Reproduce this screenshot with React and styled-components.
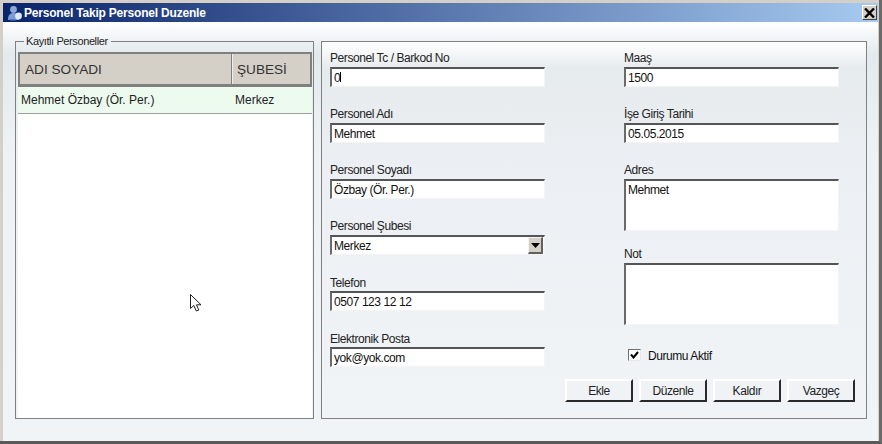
import React from "react";
import styled, { createGlobalStyle } from "styled-components";

const GlobalStyle = createGlobalStyle`
  html, body {
    margin: 0;
    padding: 0;
    background: #d4d0c8;
  }
  body {
    font-family: "Liberation Sans", Arial, sans-serif;
    font-size: 12px;
    letter-spacing: -0.43px;
    color: #111;
  }
`;

const Window = styled.div`
  position: relative;
  width: 882px;
  height: 444px;
  box-sizing: border-box;
  display: flex;
  flex-direction: column;
  padding: 3px 1px 0 3px;
  background: #d4d0c8;
  border-right: 3px solid #6a6a6a;
  border-bottom: 3px solid #5a5a5a;
`;

const TitleBar = styled.div`
  height: 19px;
  flex: none;
  display: flex;
  align-items: center;
  padding: 0 1px 0 3px;
  gap: 1px;
  background: linear-gradient(90deg, #0a246a 0%, #a6caf0 100%);
`;

const Title = styled.span`
  flex: 1;
  font-size: 12px;
  font-weight: bold;
  letter-spacing: -0.2px;
  color: #fff;
`;

const CloseButton = styled.button`
  width: 15px;
  height: 15px;
  padding: 0;
  display: flex;
  align-items: center;
  justify-content: center;
  background: #d4d0c8;
  border: 1px solid;
  border-color: #fff #404040 #404040 #fff;
`;

const Body = styled.div`
  flex: 1;
  display: flex;
  gap: 7px;
  padding: 19px 11px 22px 12px;
  background: linear-gradient(180deg, #fff 0, #e3e9ec 32px, #eef2f5 130px, #f0f4f7 100%);
`;

const Fieldset = styled.fieldset`
  width: 299px;
  box-sizing: border-box;
  flex: none;
  margin: -5px 0 0;
  padding: 5px 1px 0 2px;
  border: 1px solid #808080;
  min-width: 0;
`;

const Legend = styled.legend`
  margin-left: 6px;
  padding: 0 3px 0 2px;
  font-size: 11px;
  line-height: 11px;
  letter-spacing: -0.4px;
  color: #222;
`;

const List = styled.div`
  height: 100%;
  background: #fff;
`;

const ListHeader = styled.div`
  display: flex;
  height: 35px;
  box-sizing: border-box;
  background: #d4d0c8;
  border: 2px solid #808080;
  border-bottom-width: 3px;
`;

const HeaderCell = styled.div`
  width: ${(p) => p.$width}px;
  box-sizing: border-box;
  display: flex;
  align-items: center;
  padding-left: 5px;
  font-size: 13.6px;
  letter-spacing: 0;
  color: #333;
  ${(p) => p.$divided && "border-right: 1px solid #808080; box-shadow: 1px 0 0 #eee;"}
`;

const ListRow = styled.div`
  display: flex;
  align-items: center;
  height: 27px;
  box-sizing: border-box;
  background: #edfbee;
  border-bottom: 1px solid #a0a0a0;
  font-size: 12px;
  letter-spacing: 0;
  color: #222;
`;

const RowCell = styled.div`
  width: ${(p) => p.$width}px;
  padding-left: ${(p) => p.$pad}px;
  box-sizing: border-box;
`;

const FormPanel = styled.div`
  flex: 1;
  display: flex;
  box-sizing: border-box;
  position: relative;
  padding: 9px 0 0 8px;
  gap: 79px;
  border: 1px solid #808080;
  background: linear-gradient(180deg, #fff 0, #e6ebee 26px, #eceff3 130px, #f0f4f7 100%);
`;

const Column = styled.div`
  width: 215px;
  display: flex;
  flex-direction: column;
`;

const Field = styled.label`
  position: relative;
  display: flex;
  flex-direction: column;
  margin-bottom: ${(p) => p.$after ?? 20}px;
`;

const FieldLabel = styled.span`
  height: 16px;
  line-height: ${(p) => (p.$low ? 17 : 15)}px;
  color: #222;
`;

const sunken = `
  box-sizing: border-box;
  width: 215px;
  margin: 0;
  padding: 0 0 0 2px;
  background: #fff;
  border: 2px solid;
  border-color: #6a6a6a #f4f4f4 #f4f4f4 #6a6a6a;
  border-top-color: #555;
  border-right-width: 1px;
  border-bottom-width: 1px;
  font-family: "Liberation Sans", Arial, sans-serif;
  font-size: 12px;
  letter-spacing: -0.43px;
  color: #111;
  outline: none;
`;

const TextInput = styled.input`
  ${sunken}
  height: 20px;
`;

const Caret = styled.span`
  position: absolute;
  left: 10px;
  bottom: 5px;
  width: 1px;
  height: 10px;
  background: #000;
`;

const TextArea = styled.textarea`
  ${sunken}
  display: block;
  height: ${(p) => p.$height}px;
  resize: none;
  overflow: hidden;
  padding-top: 2px;
`;

const Select = styled.div`
  ${sunken}
  height: 20px;
  display: flex;
  align-items: center;
  justify-content: space-between;
  padding-right: 1px;
`;

const SelectArrow = styled.span`
  width: 15px;
  height: 17px;
  display: flex;
  align-items: center;
  justify-content: center;
  background: #d4d0c8;
  border: 1px solid;
  border-color: #f4f4f4 #606060 #606060 #f4f4f4;
  border-right-width: 2px;
  border-bottom-width: 2px;
  box-sizing: border-box;
`;

const CheckRow = styled.div`
  display: flex;
  align-items: center;
  gap: 7px;
  margin: 0 0 0 4px;
  height: 14px;
`;

const CheckBox = styled.span`
  width: 13px;
  height: 12px;
  margin-top: -3px;
  box-sizing: border-box;
  display: flex;
  align-items: center;
  justify-content: center;
  background: #fff;
  border: 1px solid;
  border-color: #707070 #e8e8e8 #e8e8e8 #707070;
`;

const ButtonRow = styled.div`
  position: absolute;
  right: 11px;
  bottom: 16px;
  display: flex;
  gap: 6px;
`;

const Button = styled.button`
  width: 68px;
  height: 23px;
  box-sizing: border-box;
  padding: 0;
  background: #eff3f6;
  border: 2px solid;
  border-color: #fff #2a2a2a #2a2a2a #fff;
  font-family: "Liberation Sans", Arial, sans-serif;
  font-size: 12px;
  letter-spacing: -0.43px;
  color: #222;
`;

const Cursor = styled.svg`
  position: absolute;
  left: 189px;
  top: 293px;
`;

const upperFields = [
  { label: "Personel Adı", value: "Mehmet" },
  { label: "Personel Soyadı", value: "Özbay (Ör. Per.)" },
];

const lowerFields = [
  { label: "Telefon", value: "0507 123 12 12" },
  { label: "Elektronik Posta", value: "yok@yok.com" },
];

const buttons = ["Ekle", "Düzenle", "Kaldır", "Vazgeç"];

const App = () => (
  <>
    <GlobalStyle />
    <Window>
      <TitleBar>
        <svg width="17" height="16" viewBox="0 0 17 16">
          <circle cx="7.5" cy="4.5" r="3.4" fill="#8fa8d8" />
          <path d="M2 15c0-5 2-7 5.5-7s5.5 2 5.5 7z" fill="#7d9bd4" />
          <circle cx="12.5" cy="11" r="3.4" fill="#dfe8f4" />
          <path d="M3 14h6l1 1.5H4z" fill="#4f79bd" />
        </svg>
        <Title>Personel Takip Personel Duzenle</Title>
        <CloseButton aria-label="Kapat">
          <svg width="11" height="10" viewBox="0 0 11 10">
            <path d="M1 0.5 10 9.5M10 0.5 1 9.5" stroke="#000" strokeWidth="2.4" fill="none" />
          </svg>
        </CloseButton>
      </TitleBar>
      <Body>
        <Fieldset>
          <Legend>Kayıtlı Personeller</Legend>
          <List>
            <ListHeader>
              <HeaderCell $width={212} $divided>ADI SOYADI</HeaderCell>
              <HeaderCell $width={78}>ŞUBESİ</HeaderCell>
            </ListHeader>
            <ListRow>
              <RowCell $width={214} $pad={3}>Mehmet Özbay (Ör. Per.)</RowCell>
              <RowCell $width={80} $pad={3}>Merkez</RowCell>
            </ListRow>
          </List>
        </Fieldset>
        <FormPanel>
          <Column>
            <Field>
              <FieldLabel>Personel Tc / Barkod No</FieldLabel>
              <TextInput defaultValue="0" />
              <Caret />
            </Field>
            {upperFields.map((f) => (
              <Field key={f.label}>
                <FieldLabel>{f.label}</FieldLabel>
                <TextInput defaultValue={f.value} />
              </Field>
            ))}
            <Field>
              <FieldLabel>Personel Şubesi</FieldLabel>
              <Select>
                Merkez
                <SelectArrow>
                  <svg width="9" height="5" viewBox="0 0 9 5">
                    <path d="M0 0h9L4.5 5z" fill="#000" />
                  </svg>
                </SelectArrow>
              </Select>
            </Field>
            {lowerFields.map((f) => (
              <Field key={f.label}>
                <FieldLabel $low>{f.label}</FieldLabel>
                <TextInput defaultValue={f.value} />
              </Field>
            ))}
          </Column>
          <Column>
            <Field>
              <FieldLabel>Maaş</FieldLabel>
              <TextInput defaultValue="1500" />
            </Field>
            <Field>
              <FieldLabel>İşe Giriş Tarihi</FieldLabel>
              <TextInput defaultValue="05.05.2015" />
            </Field>
            <Field $after={16}>
              <FieldLabel>Adres</FieldLabel>
              <TextArea $height={52} defaultValue="Mehmet" />
            </Field>
            <Field $after={24}>
              <FieldLabel>Not</FieldLabel>
              <TextArea $height={62} defaultValue="" />
            </Field>
            <CheckRow>
              <CheckBox>
                <svg width="9" height="8" viewBox="0 0 9 8">
                  <path d="M1 3.5 3.5 6.5 8 1" stroke="#000" strokeWidth="2" fill="none" />
                </svg>
              </CheckBox>
              Durumu Aktif
            </CheckRow>
          </Column>
          <ButtonRow>
            {buttons.map((b) => (
              <Button key={b}>{b}</Button>
            ))}
          </ButtonRow>
        </FormPanel>
      </Body>
      <Cursor width="14" height="20" viewBox="0 0 14 20">
        <path
          d="M1.5 1.5V15.5L4.8 12.5 7.3 18 9.8 17 7.5 11.8H12z"
          fill="#fff"
          stroke="#222"
          strokeWidth="1"
        />
      </Cursor>
    </Window>
  </>
);

export default App;
